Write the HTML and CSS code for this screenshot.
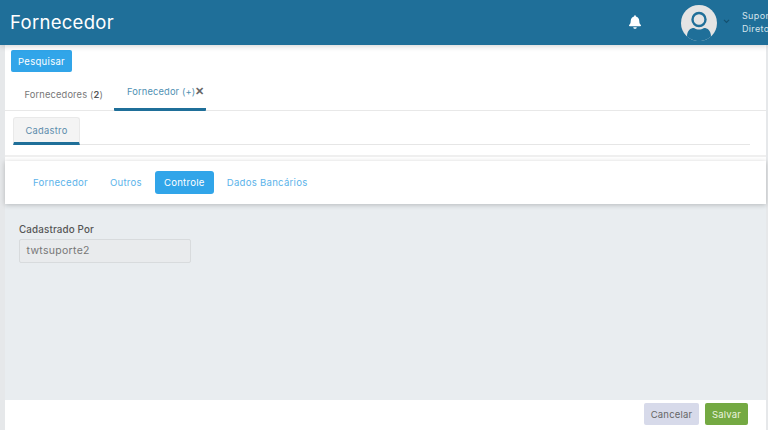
FILE: index.html
```html
<!DOCTYPE html>
<html lang="pt">
<head>
<meta charset="utf-8">
<title>Fornecedor</title>
<link rel="stylesheet" href="styles.css">
</head>
<body>
<header class="topbar">
  <h1 class="title">Fornecedor</h1>
  <div class="top-right">
    <svg class="bell" viewBox="0 0 448 512" width="12" height="14"><path fill="#fff" d="M224 512c35 0 64-29 64-64H160c0 35 29 64 64 64zm215-150c-19-21-56-52-56-154 0-78-54-140-127-155V32a32 32 0 1 0-64 0v21C119 68 65 130 65 208c0 102-37 133-56 154-6 6-9 14-9 22 0 16 13 32 32 32h384c19 0 32-16 32-32 0-8-3-16-9-22z"/></svg>
    <svg class="avatar" viewBox="0 0 36 36" width="36" height="36"><circle cx="18" cy="18" r="18" fill="#e4e4e4"/><circle cx="18" cy="14.500" r="6.500" fill="none" stroke="#1f6f99" stroke-width="2.400"/><path fill="#1f6f99" d="M6 31.500c0-6 3.500-8.500 7-8.500 2 1 3 1.500 5 1.500s3-.5 5-1.500c3.500 0 7 2.500 7 8.500a18 18 0 0 1-24 0z"/></svg>
    <svg class="caret" viewBox="0 0 8 6" width="7" height="5"><path d="M1 1l3 3 3-3" fill="none" stroke="#14506f" stroke-width="1.500"/></svg>
    <div class="user"><span>Suporte</span><span>Diretor</span></div>
  </div>
</header>
<div class="page">
  <div class="search-row"><button class="btn btn-search">Pesquisar</button></div>
  <nav class="tabs">
    <a class="tab">Fornecedores (<b>2</b>)</a>
    <a class="tab tab-active">Fornecedor (+)<span class="close">✕</span></a>
  </nav>
  <div class="subtabs-wrap">
    <div class="subtabs"><a class="subtab">Cadastro</a></div>
  </div>
  <nav class="pills">
    <a class="pill">Fornecedor</a>
    <a class="pill">Outros</a>
    <a class="pill pill-active">Controle</a>
    <a class="pill">Dados Bancários</a>
  </nav>
  <main class="form">
    <label class="label">Cadastrado Por</label>
    <div class="input">twtsuporte2</div>
  </main>
  <footer class="actions">
    <button class="btn btn-cancel">Cancelar</button>
    <button class="btn btn-save">Salvar</button>
  </footer>
</div>
</body>
</html>
```
FILE: styles.css
```css
* { box-sizing: border-box; }
html, body { margin: 0; height: 430px; overflow: hidden; }
body { font-family: "Inter", "Liberation Sans", sans-serif; background: #e6e8ea; font-size: 10px; color: #666; }
.topbar { height: 44.500px; background: #1f6f99; display: flex; align-items: center; justify-content: space-between; padding-left: 10px; position: relative; z-index: 2; box-shadow: 0 1px 6px rgba(0,0,0,.18); overflow: hidden; }
.title { margin: 0; font-size: 18.500px; font-weight: 400; color: #fff; letter-spacing: .3px; }
.top-right { display: flex; align-items: center; width: 139px; flex: none; }
.bell, .avatar, .caret, .user { flex: none; }
.avatar { margin: 1px 0 0 40px; }
.caret { margin-left: 6px; margin-top: -1px; }
.user { margin-left: 12px; display: flex; flex-direction: column; gap: 2px; font-size: 9px; line-height: 11px; letter-spacing: .35px; color: #d5e4ec; white-space: nowrap; }
.page { height: 385.500px; margin: 0 2px 0 5px; background: #fff; display: flex; flex-direction: column; }
.search-row { padding: 5.500px 0 0 6px; height: 27.500px; }
.btn { border: 0; border-radius: 2px; font: inherit; font-size: 9.500px; letter-spacing: .2px; height: 22px; padding: 0; cursor: pointer; }
.btn-search { width: 61px; background: #31a5e9; color: #fff; letter-spacing: .3px; }
.tabs { height: 38.500px; display: flex; border-bottom: 1px solid #e8e8e8; padding-left: 7px; }
.tab { width: 102px; height: 39px; padding-left: 12.500px; line-height: 46px; font-size: 9.300px; letter-spacing: .15px; color: #777; white-space: nowrap; }
.tab b { color: #555; font-weight: 600; }
.tab-active { width: 92px; padding-left: 13px; line-height: 39px; color: #4f91b3; border-bottom: 3px solid #1f6f99; border-radius: 1px; }
.close { margin-left: 0; color: #666; font-size: 10.500px; font-weight: 700; }
.subtabs-wrap { height: 46px; padding: 6px 16px 0 8px; border-bottom: 2px solid #efefef; flex: none; }
.subtabs { height: 28px; border-bottom: 1px solid #e6e6e6; }
.subtab { display: block; width: 67px; height: 28px; padding-top: 7px; text-align: center; font-size: 9.300px; letter-spacing: .3px; color: #5b8bab; background: #f4f4f4; border: 1px solid #e9e9e9; border-bottom: 3px solid #1f6f99; border-radius: 3px 3px 0 0; }
.pills { margin-top: 4.500px; height: 43px; display: flex; align-items: center; padding-left: 17px; background: #fff; box-shadow: 0 1px 5px rgba(0,0,0,.22); position: relative; flex: none; }
.pill { padding: 0 11px; height: 23px; line-height: 23px; font-size: 9.600px; letter-spacing: .25px; color: #5bb3ea; border-radius: 3px; white-space: nowrap; }
.pill-active { width: 59px; padding: 0; margin: 0 2px; text-align: center; background: #31a5e9; color: #fff; }
.form { flex: 1; background: #e9edf0; padding: 19.500px 14px 0; }
.label { display: block; font-size: 9.800px; font-weight: 500; letter-spacing: .15px; color: #555; line-height: 12px; }
.input { width: 172px; height: 24px; margin-top: 3px; padding-left: 6.500px; line-height: 22px; font-size: 10.500px; color: #777; background: #e9ebed; border: 1px solid #d8dbdd; border-radius: 2px; letter-spacing: .3px; }
.actions { height: 30px; flex: none; background: #fff; display: flex; justify-content: flex-end; align-items: flex-start; padding: 3px 18px 0 0; gap: 6px; }
.btn-cancel { width: 55px; background: #d7daea; color: #666; }
.btn-save { width: 43px; background: #74a942; color: #eaf3df; }
```
